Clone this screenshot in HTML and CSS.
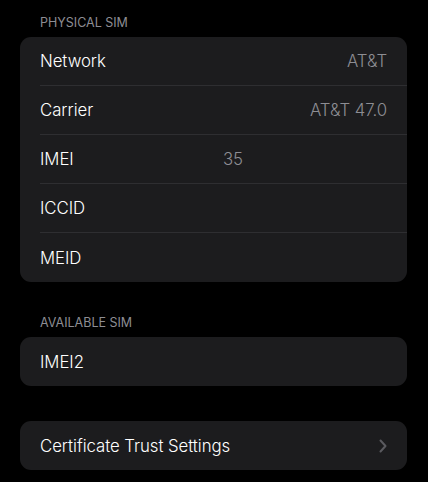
FILE: index.html
```html
<!DOCTYPE html>
<html lang="en">
<head>
    <meta charset="UTF-8">
    <meta name="viewport" content="width=device-width, initial-scale=1.0">
    <title>About</title>
    <link rel="stylesheet" href="styles.css">
</head>
<body>
    <h2 class="section-title first">PHYSICAL SIM</h2>
    <div class="group">
        <div class="row"><span class="label">Network</span><span class="value">AT&amp;T</span></div>
        <div class="row"><span class="label">Carrier</span><span class="value">AT&amp;T 47.0</span></div>
        <div class="row"><span class="label">IMEI</span><span class="value mid">35</span></div>
        <div class="row"><span class="label">ICCID</span></div>
        <div class="row"><span class="label">MEID</span></div>
    </div>

    <h2 class="section-title">AVAILABLE SIM</h2>
    <div class="group">
        <div class="row"><span class="label">IMEI2</span></div>
    </div>

    <div class="group spaced">
        <div class="row">
            <span class="label">Certificate Trust Settings</span>
            <svg class="chevron" width="8" height="14" viewBox="0 0 8 14">
                <path d="M1.5 1.5 L6.5 7 L1.5 12.5" fill="none" stroke="#5a5a5f" stroke-width="2" stroke-linecap="round" stroke-linejoin="round"/>
            </svg>
        </div>
    </div>
</body>
</html>
```

FILE: styles.css
```css
body {
    margin: 0;
    padding: 0 21px 0 20px;
    background-color: #000;
    font-family: Inter, "Noto Sans", sans-serif;
    color: #fff;
}
.section-title {
    margin: 0;
    padding: 32px 20px 5px;
    font-size: 12.5px;
    font-weight: 400;
    line-height: 18px;
    color: #8d8d93;
}
.section-title.first {
    padding-top: 14px;
}
.group {
    background-color: #1c1c1e;
    border-radius: 11px;
    overflow: hidden;
}
.group.spaced {
    margin-top: 35px;
}
.row {
    display: flex;
    align-items: center;
    height: 48px;
    margin-left: 20px;
    padding-right: 20px;
    border-bottom: 1px solid #2e2e31;
    position: relative;
}
.row:last-child {
    border-bottom: none;
    height: 49px;
}
.label {
    font-size: 16.8px;
    font-weight: 350;
    letter-spacing: -0.05px;
    flex: 1;
}
.value {
    font-size: 16.8px;
    font-weight: 350;
    color: #8d8d93;
    letter-spacing: -0.05px;
}
.value.mid {
    position: absolute;
    left: 183px;
}
.chevron {
    display: block;
}
```
